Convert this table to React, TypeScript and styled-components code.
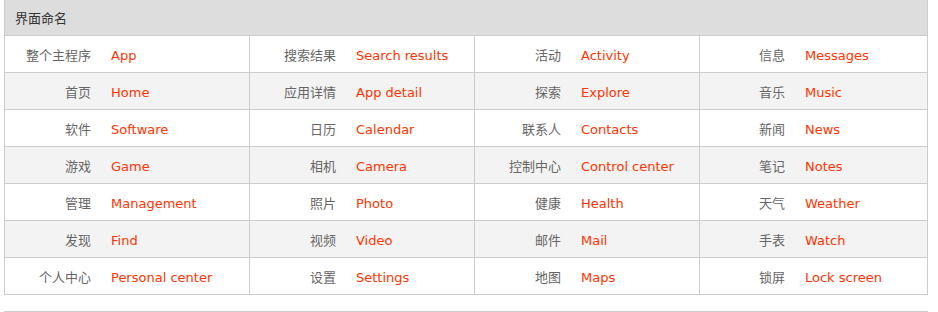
import styled, { createGlobalStyle } from 'styled-components';

interface Entry {
  cn: string;
  en: string;
}

const rows: Entry[][] = [
  [
    { cn: '整个主程序', en: 'App' },
    { cn: '搜索结果', en: 'Search results' },
    { cn: '活动', en: 'Activity' },
    { cn: '信息', en: 'Messages' },
  ],
  [
    { cn: '首页', en: 'Home' },
    { cn: '应用详情', en: 'App detail' },
    { cn: '探索', en: 'Explore' },
    { cn: '音乐', en: 'Music' },
  ],
  [
    { cn: '软件', en: 'Software' },
    { cn: '日历', en: 'Calendar' },
    { cn: '联系人', en: 'Contacts' },
    { cn: '新闻', en: 'News' },
  ],
  [
    { cn: '游戏', en: 'Game' },
    { cn: '相机', en: 'Camera' },
    { cn: '控制中心', en: 'Control center' },
    { cn: '笔记', en: 'Notes' },
  ],
  [
    { cn: '管理', en: 'Management' },
    { cn: '照片', en: 'Photo' },
    { cn: '健康', en: 'Health' },
    { cn: '天气', en: 'Weather' },
  ],
  [
    { cn: '发现', en: 'Find' },
    { cn: '视频', en: 'Video' },
    { cn: '邮件', en: 'Mail' },
    { cn: '手表', en: 'Watch' },
  ],
  [
    { cn: '个人中心', en: 'Personal center' },
    { cn: '设置', en: 'Settings' },
    { cn: '地图', en: 'Maps' },
    { cn: '锁屏', en: 'Lock screen' },
  ],
];

const GlobalStyle = createGlobalStyle`
  body {
    margin: 0;
    background: #fff;
    font-family: "DejaVu Sans", "Noto Sans CJK SC", sans-serif;
    font-size: 13px;
  }
`;

const Page = styled.div`
  padding: 0 10px 0 4px;
  width: 924px;
`;

const Table = styled.div`
  border-left: 1px solid #ccc;
  border-right: 1px solid #ccc;
  border-bottom: 1px solid #ccc;
`;

const Header = styled.div`
  height: 35px;
  display: flex;
  align-items: center;
  padding-left: 10px;
  background: #ddd;
  color: #333;
  border-bottom: 1px solid #ccc;
`;

const Row = styled.div<{ $striped: boolean }>`
  display: grid;
  grid-template-columns: 245px 225px 225px 1fr;
  height: 37px;
  background: ${(p) => (p.$striped ? '#f3f3f3' : '#fff')};
  border-bottom: 1px solid #ccc;
  box-sizing: border-box;

  &:last-child {
    border-bottom: none;
    height: 36px;
  }
`;

const Label = styled.span`
  width: 86px;
  text-align: right;
  color: #666;
  font-family: "Noto Sans CJK SC", sans-serif;
`;

const Value = styled.span`
  margin-left: 20px;
  margin-top: 2px;
  color: #f30;
`;

const Cell = styled.div`
  display: flex;
  align-items: center;
  border-right: 1px solid #ccc;

  &:last-child {
    border-right: none;
  }

  &:last-child ${Label} {
    width: 85px;
  }
`;

const NextTable = styled.div`
  margin-top: 16px;
  border-top: 1px solid #ccc;
`;

export default function App() {
  return (
    <Page>
      <GlobalStyle />
      <Table>
        <Header>界面命名</Header>
        {rows.map((row, i) => (
          <Row key={i} $striped={i % 2 === 1}>
            {row.map((entry) => (
              <Cell key={entry.en}>
                <Label>{entry.cn}</Label>
                <Value>{entry.en}</Value>
              </Cell>
            ))}
          </Row>
        ))}
      </Table>
      <NextTable />
    </Page>
  );
}
